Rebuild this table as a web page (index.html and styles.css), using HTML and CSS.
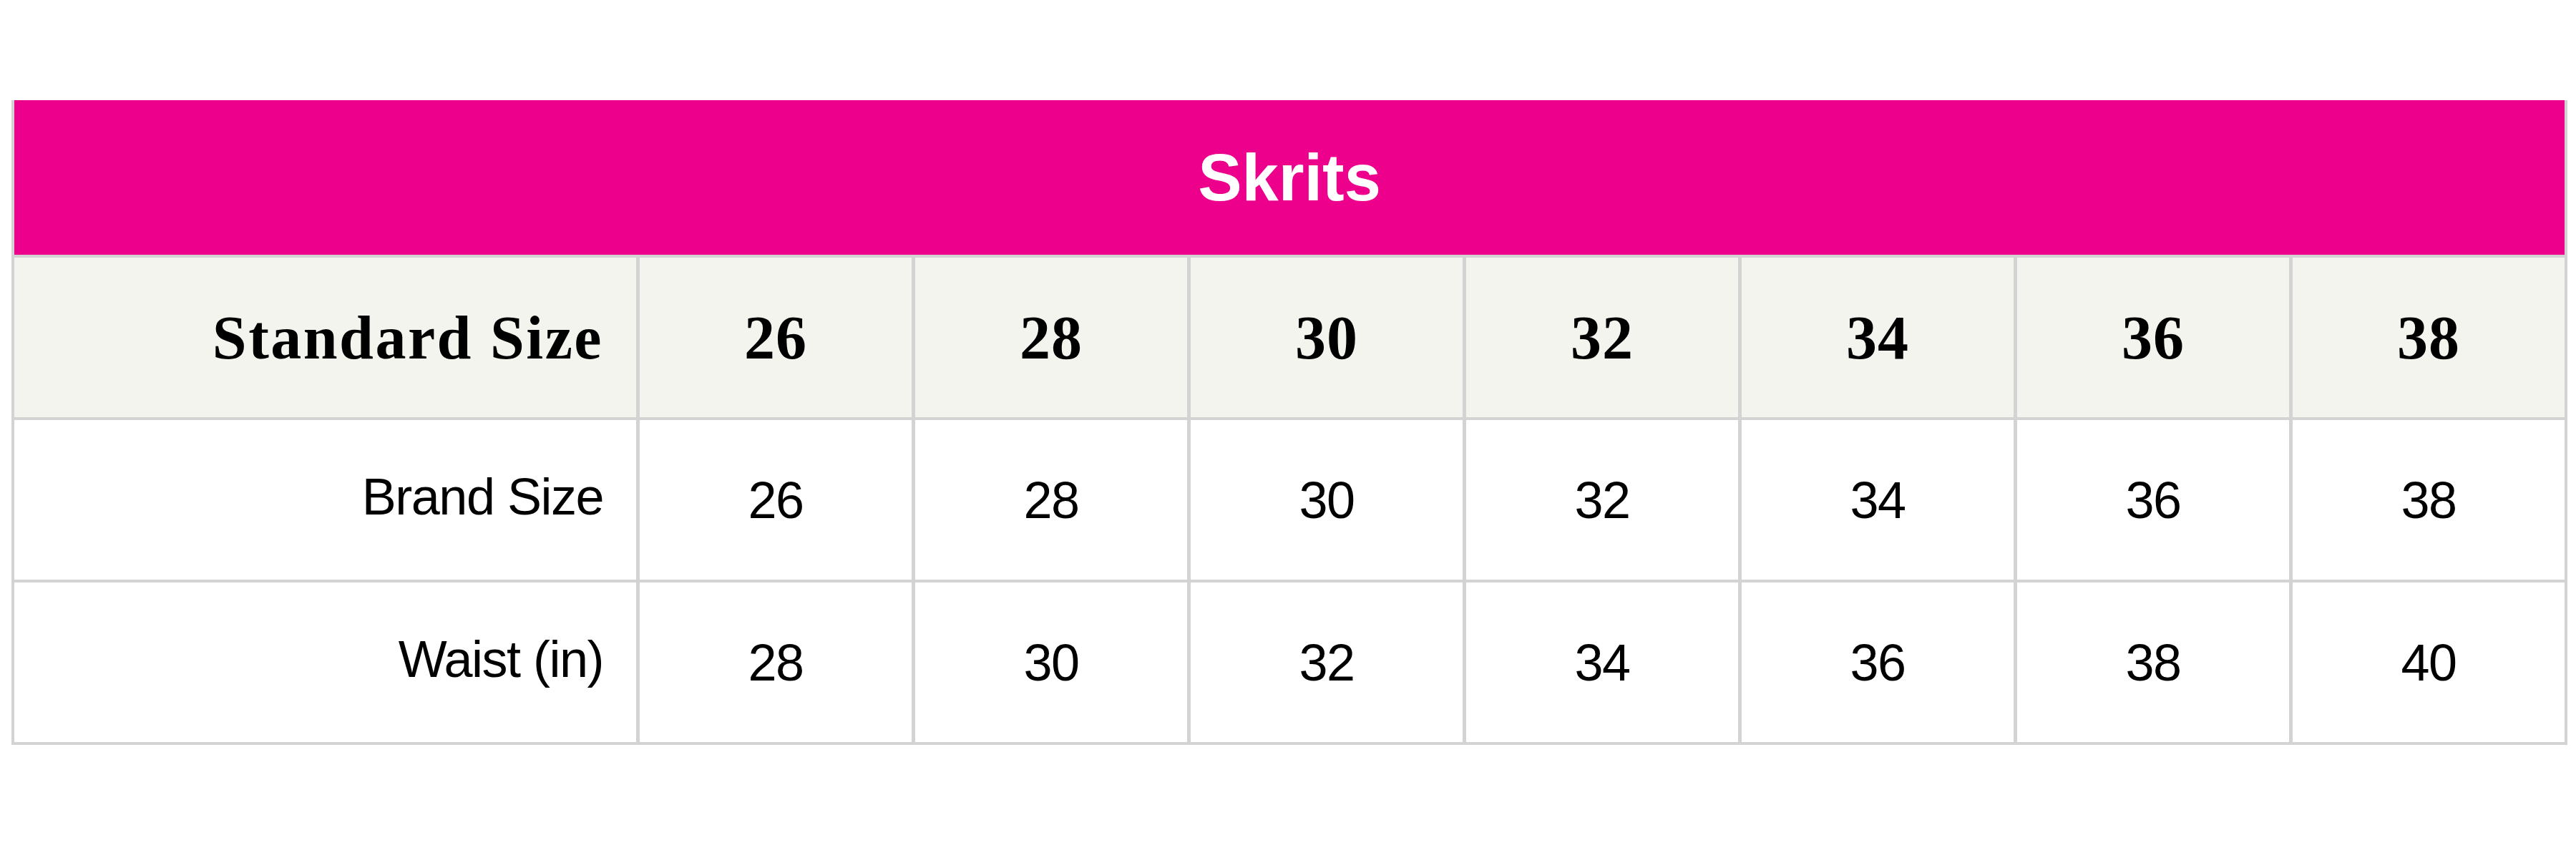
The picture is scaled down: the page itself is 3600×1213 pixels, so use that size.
FILE: index.html
```html
<!DOCTYPE html>
<html lang="en">
<head>
<meta charset="utf-8">
<title>Skrits Size Chart</title>
<link rel="stylesheet" href="styles.css">
</head>
<body>
<div class="chart">
  <div class="title">Skrits</div>

  <div class="cell head label">Standard Size</div>
  <div class="cell head">26</div>
  <div class="cell head">28</div>
  <div class="cell head">30</div>
  <div class="cell head">32</div>
  <div class="cell head">34</div>
  <div class="cell head">36</div>
  <div class="cell head">38</div>

  <div class="cell body label">Brand Size</div>
  <div class="cell body">26</div>
  <div class="cell body">28</div>
  <div class="cell body">30</div>
  <div class="cell body">32</div>
  <div class="cell body">34</div>
  <div class="cell body">36</div>
  <div class="cell body">38</div>

  <div class="cell body label">Waist (in)</div>
  <div class="cell body">28</div>
  <div class="cell body">30</div>
  <div class="cell body">32</div>
  <div class="cell body">34</div>
  <div class="cell body">36</div>
  <div class="cell body">38</div>
  <div class="cell body">40</div>
</div>
</body>
</html>
```
FILE: styles.css
```css
html, body {
  margin: 0;
  padding: 0;
  background: #ffffff;
}

body {
  padding: 140px 0 0 16px;
  font-family: "Liberation Sans", Arial, sans-serif;
}

.chart {
  width: 3572px;
  box-sizing: border-box;
  display: grid;
  grid-template-columns: 869px repeat(7, 1fr);
  grid-template-rows: 216px 223px 223px 223px;
  column-gap: 5px;
  row-gap: 4px;
  padding: 0 4px 4px 4px;
  background: #d3d3d3;
}

.title {
  grid-column: 1 / -1;
  background: #ec008c;
  color: #ffffff;
  font-family: "Liberation Sans", Arial, sans-serif;
  font-weight: bold;
  font-size: 92px;
  display: flex;
  align-items: center;
  justify-content: center;
}

.cell {
  display: flex;
  align-items: center;
  justify-content: center;
  color: #000000;
}

.head {
  background: #f4f4ee;
  font-family: "Liberation Serif", "Times New Roman", serif;
  font-weight: bold;
  font-size: 86px;
  letter-spacing: 1px;
}

.head.label {
  letter-spacing: 2.5px;
}

.body {
  background: #ffffff;
  font-family: "Liberation Sans", Arial, sans-serif;
  font-size: 72px;
  letter-spacing: -1.5px;
}

.label {
  justify-content: flex-end;
  padding-right: 46px;
}

.body.label {
  padding-bottom: 10px;
}
```
